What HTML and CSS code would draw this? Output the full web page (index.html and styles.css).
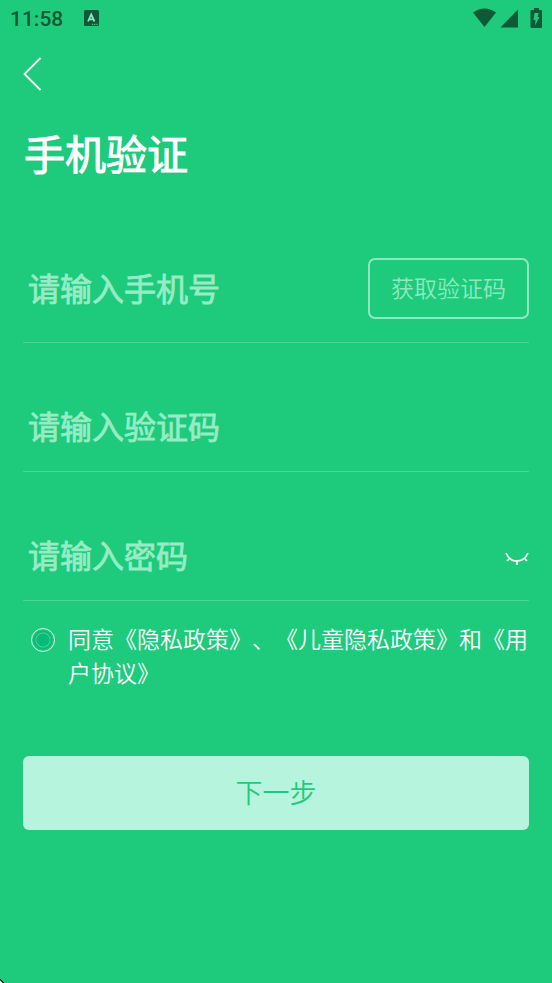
FILE: index.html
```html
<!DOCTYPE html>
<html lang="zh-CN">
<head>
<meta charset="utf-8">
<meta name="viewport" content="width=device-width, initial-scale=1">
<title>手机验证</title>
<link rel="stylesheet" href="styles.css">
</head>
<body>
<header class="status">
  <span class="time">11:58</span>
  <svg class="app-icon" width="15" height="16" viewBox="0 0 15 16" aria-hidden="true">
    <rect width="15" height="16" rx="1.5" fill="#0e5936"/>
    <path d="M4 11.500L7.200 4.500L10.500 11.500M5.200 9.300H9.300" fill="none" stroke="#8ee5bd" stroke-width="1.8"/>
    <path d="M8 14.300H14" stroke="#6fdca9" stroke-width="1" stroke-dasharray="1.200 1"/>
  </svg>
  <svg class="signals" width="70" height="20" viewBox="0 0 70 20" aria-hidden="true">
    <g fill="#0e5936">
      <path d="M1 4.500Q12.500-3.500 24 4.500L12.500 19Z"/>
      <path d="M46 1.500V19.500H28.500Z"/>
      <path d="M62 0H67V2H69Q70 2 70 3V19Q70 20 69 20H59.500Q58.500 20 58.500 19V3Q58.500 2 59.500 2H62Z"/>
    </g>
    <path d="M62.500 5H66.800L65.500 9H67.500L63 17.500L63.500 12H61.500Z" fill="#1ecb7c"/>
  </svg>
</header>
<main class="page">
  <button class="back" type="button" aria-label="返回">
    <svg width="19" height="34" viewBox="0 0 19 34" aria-hidden="true"><path d="M17.500 1L1.500 17L17.500 33" fill="none" stroke="#fff" stroke-width="1.8"/></svg>
  </button>
  <h1 class="title">手机验证</h1>
  <form class="form">
    <div class="field field-phone">
      <input class="input" type="tel" placeholder="请输入手机号" aria-label="手机号">
      <button class="code" type="button">获取验证码</button>
    </div>
    <div class="field">
      <input class="input" type="text" placeholder="请输入验证码" aria-label="验证码">
    </div>
    <div class="field">
      <input class="input" type="password" placeholder="请输入密码" aria-label="密码">
      <button class="eye" type="button" aria-label="显示密码">
        <svg width="24" height="14" viewBox="0 0 24 14" aria-hidden="true"><path d="M1 1Q4.500 9 12 9T23 1M4.800 6L2 9M12 9V13M19.200 6L22 9" fill="none" stroke="#f2fff9" stroke-width="1.8"/></svg>
      </button>
    </div>
    <div class="agree">
      <input class="radio" type="radio" id="agree">
      <label for="agree">同意<a href="#privacy">《隐私政策》</a>、<a href="#children">《儿童隐私政策》</a>和<a href="#terms">《用户协议》</a></label>
    </div>
    <button class="next" type="submit">下一步</button>
  </form>
</main>
</body>
</html>
```
FILE: styles.css
```css
* {
  box-sizing: border-box;
}

body {
  position: relative;
  min-height: 100vh;
  margin: 0;
  background: #1ecb7c;
  color: #fff;
  font-family: "Noto Sans CJK SC", sans-serif;
  text-spacing-trim: space-all;
}

/* rounded display corner */
body::after {
  content: "";
  position: absolute;
  bottom: 0;
  left: 0;
  width: 4px;
  height: 4px;
  background: linear-gradient(45deg, #fff 30%, #000 40%, #000 50%, transparent 55%);
}

button,
input {
  margin: 0;
  padding: 0;
  border: 0;
  background: none;
  color: inherit;
  font: inherit;
}

svg {
  display: block;
}

.status {
  display: flex;
  align-items: center;
  height: 36px;
  padding: 0 10px;
  color: #0e5936;
}

.time {
  padding-top: 2px;
  font: 500 21px/26px Roboto, sans-serif;
}

.app-icon {
  margin-left: 21px;
}

.signals {
  margin-left: auto;
}

.page {
  padding: 21px 23px;
}

.back {
  display: block;
}

.title {
  margin: 31px 0 0;
  padding-left: 1px;
  font-size: 41px;
  font-weight: 400;
  line-height: 60px;
  -webkit-text-stroke: 1px #fff;
}

.form {
  margin-top: 76px;
}

.field {
  display: flex;
  align-items: center;
  padding: 60px 0 20px;
  border-bottom: 1px solid #4bd697;
}

.field-phone {
  padding: 0 0 23px;
}

.input {
  flex: 1;
  min-width: 0;
  height: 48px;
  padding: 0 5px 4px;
  outline: 0;
  font-size: 32px;
  font-weight: 350;
}

.input::placeholder {
  color: #97ebc5;
  opacity: 1;
  -webkit-text-stroke: 1px #97ebc5;
}

.code {
  width: 161px;
  height: 61px;
  padding-bottom: 3px;
  border: 2px solid #8ee8bf;
  border-radius: 7px;
  color: #8ee8bf;
  font-size: 23px;
  font-weight: 350;
}

.eye {
  margin-top: 6px;
}

.agree {
  display: flex;
  gap: 13px;
  margin-top: 20px;
  padding-left: 8px;
  font-size: 23px;
  font-weight: 350;
  line-height: 34px;
}

.agree a {
  color: inherit;
  text-decoration: none;
}

.radio {
  flex: none;
  width: 24px;
  height: 24px;
  margin-top: 7px;
  appearance: none;
  border: 1px solid #d2f5e5;
  border-radius: 50%;
  background: radial-gradient(circle, #08ba77 6px, #4bd19b 7px, #08ba77 8px, #08ba77 9px, #1ecb7c 10px);
}

.next {
  display: block;
  width: 100%;
  height: 74px;
  margin-top: 67px;
  padding-bottom: 3px;
  border-radius: 6px;
  background: #b7f4dd;
  color: #1ecb7c;
  font-size: 27px;
  font-weight: 350;
}
```
